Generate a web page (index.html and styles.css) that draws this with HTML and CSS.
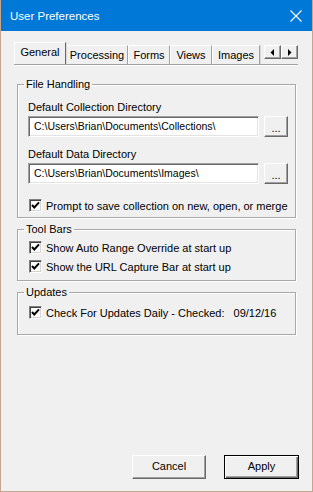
FILE: index.html
```html
<!DOCTYPE html>
<html lang="en">
<head>
  <meta charset="UTF-8" />
  <title>User Preferences</title>
  <link rel="stylesheet" href="styles.css">
</head>
<body>
  <div class="window">
    <!-- Title bar -->
    <div class="titlebar">
      <span class="title">User Preferences</span>
      <svg class="close" width="12" height="12" viewBox="0 0 12 12">
        <path d="M0.5 0.5 L11.5 11.5 M11.5 0.5 L0.5 11.5" stroke="#fff" stroke-width="1.1" fill="none" />
      </svg>
    </div>

    <div class="content">
      <!-- Tab strip -->
      <div class="tabs">
        <div class="tab selected">General</div>
        <div class="tab tab-processing">Processing</div>
        <div class="tab tab-forms">Forms</div>
        <div class="tab tab-views">Views</div>
        <div class="tab tab-images">Images</div>
        <div class="tab-arrows">
          <div class="arrow-btn">
            <svg width="5" height="7" viewBox="0 0 5 7"><path d="M4 0 L4 7 L0.5 3.5 Z" fill="#000" /></svg>
          </div>
          <div class="arrow-btn">
            <svg width="5" height="7" viewBox="0 0 5 7"><path d="M1 0 L1 7 L4.5 3.5 Z" fill="#000" /></svg>
          </div>
        </div>
      </div>

      <!-- File Handling -->
      <fieldset class="group group-files">
        <legend>File Handling</legend>
        <div class="field-label first">Default Collection Directory</div>
        <div class="path-row">
          <div class="textbox">C:\Users\Brian\Documents\Collections\</div>
          <div class="browse-btn">...</div>
        </div>
        <div class="field-label">Default Data Directory</div>
        <div class="path-row">
          <div class="textbox">C:\Users\Brian\Documents\Images\</div>
          <div class="browse-btn">...</div>
        </div>
        <div class="check-row prompt-row">
          <span class="checkbox"><svg width="11" height="11" viewBox="0 0 11 11"><path d="M2 5 L4.3 7.5 L9 2.3" stroke="#000" stroke-width="2" fill="none" /></svg></span>
          <span>Prompt to save collection on new, open, or merge</span>
        </div>
      </fieldset>

      <!-- Tool Bars -->
      <fieldset class="group group-toolbars">
        <legend>Tool Bars</legend>
        <div class="check-row toolbar-first">
          <span class="checkbox"><svg width="11" height="11" viewBox="0 0 11 11"><path d="M2 5 L4.3 7.5 L9 2.3" stroke="#000" stroke-width="2" fill="none" /></svg></span>
          <span>Show Auto Range Override at start up</span>
        </div>
        <div class="check-row toolbar-second">
          <span class="checkbox"><svg width="11" height="11" viewBox="0 0 11 11"><path d="M2 5 L4.3 7.5 L9 2.3" stroke="#000" stroke-width="2" fill="none" /></svg></span>
          <span>Show the URL Capture Bar at start up</span>
        </div>
      </fieldset>

      <!-- Updates -->
      <fieldset class="group group-updates">
        <legend>Updates</legend>
        <div class="check-row updates-row">
          <span class="checkbox"><svg width="11" height="11" viewBox="0 0 11 11"><path d="M2 5 L4.3 7.5 L9 2.3" stroke="#000" stroke-width="2" fill="none" /></svg></span>
          <span class="updates-text">Check For Updates Daily - Checked:</span>
          <span class="updates-date">09/12/16</span>
        </div>
      </fieldset>
    </div>

    <!-- Dialog buttons -->
    <div class="footer">
      <div class="btn">Cancel</div>
      <div class="btn default">Apply</div>
    </div>
  </div>
</body>
</html>
```

FILE: styles.css
```css
body {
  margin: 0;
  font-family: "Liberation Sans", Arial, sans-serif;
  font-size: 11px;
  color: #000;
  background: #f0f0f0;
}

.window {
  width: 313px;
  height: 492px;
  box-sizing: border-box;
  border: 1px solid #c4a690;
  border-top: none;
  background: #f0f0f0;
  display: flex;
  flex-direction: column;
}

.titlebar {
  height: 31px;
  background: #0078d7;
  color: #fff;
  display: flex;
  align-items: center;
  justify-content: space-between;
  padding: 0 10px 0 9px;
  font-size: 11.5px;
}

.close {
  display: block;
  margin-top: 1px;
}

.content {
  flex: 1;
  padding: 11px 14px 0 12px;
}

/* Tabs */
.tabs {
  display: flex;
  align-items: flex-end;
  height: 22px;
  border-bottom: 1px solid #a0a0a0;
  box-shadow: 0 1px 0 #fff;
  margin-left: 1px;
}

.tab {
  box-sizing: border-box;
  height: 19px;
  line-height: 18px;
  text-align: center;
  border-top: 1px solid #fff;
  border-left: 1px solid #fff;
  border-right: 1px solid #a0a0a0;
  box-shadow: 1px 0 0 #d8d8d8;
  font-size: 11px;
}

.tab.selected {
  width: 52px;
  height: 22px;
  line-height: 19px;
  border-right: 1px solid #696969;
  background: #f0f0f0;
  position: relative;
  z-index: 1;
}

.tab-processing { width: 62px; }
.tab-forms { width: 42px; }
.tab-views { width: 42px; }
.tab-images { width: 48px; }

.tab-arrows {
  display: flex;
  margin-left: auto;
  margin-bottom: 5px;
}

.arrow-btn {
  box-sizing: border-box;
  width: 17px;
  height: 14px;
  display: flex;
  align-items: center;
  justify-content: center;
  border-top: 1px solid #fff;
  border-left: 1px solid #fff;
  border-right: 1px solid #696969;
  border-bottom: 1px solid #696969;
  box-shadow: inset -1px -1px 0 #a0a0a0;
}

.arrow-btn svg {
  display: block;
}

/* Group boxes */
.group {
  min-width: 0;
  margin: 0 2px 0 4px;
  padding: 0 7px 0 10px;
  border: 1px solid #a8a8a8;
  box-shadow: 1px 1px 0 #fff, inset 1px 1px 0 #fff;
}

.group legend {
  padding: 0 2px;
  margin-left: -4px;
  line-height: 14px;
  font-size: 11px;
}

.group-files {
  margin-top: 12px;
  padding-bottom: 5px;
}

.group-toolbars {
  margin-top: 4px;
  padding-bottom: 7px;
}

.group-updates {
  margin-top: 4px;
  padding-bottom: 15px;
}

.field-label {
  line-height: 14px;
  margin-top: 10px;
  font-size: 11px;
}

.field-label.first {
  margin-top: 9px;
}

.path-row {
  display: flex;
  align-items: center;
  margin-top: 2px;
}

.textbox {
  box-sizing: border-box;
  width: 232px;
  height: 21px;
  line-height: 19px;
  padding-left: 5px;
  background: #fff;
  border-top: 1px solid #a0a0a0;
  border-left: 1px solid #a0a0a0;
  border-right: 1px solid #fff;
  border-bottom: 1px solid #fff;
  box-shadow: inset 1px 1px 0 #696969, inset -1px -1px 0 #e3e3e3;
  font-size: 10.5px;
  white-space: nowrap;
  overflow: hidden;
}

.browse-btn {
  box-sizing: border-box;
  width: 24px;
  height: 21px;
  margin-left: 5px;
  text-align: center;
  line-height: 23px;
  border-top: 1px solid #fff;
  border-left: 1px solid #fff;
  border-right: 1px solid #696969;
  border-bottom: 1px solid #696969;
  box-shadow: inset -1px -1px 0 #a0a0a0;
  font-size: 11px;
}

.check-row {
  display: flex;
  align-items: center;
  height: 13px;
  font-size: 11px;
  white-space: nowrap;
}

.prompt-row { margin-top: 15px; }
.toolbar-first { margin-top: 5px; }
.toolbar-second { margin-top: 6px; }
.updates-row { margin-top: 7px; }

.checkbox {
  box-sizing: border-box;
  width: 13px;
  height: 13px;
  margin: 0 4px 0 1px;
  background: #fff;
  border-top: 1px solid #808080;
  border-left: 1px solid #808080;
  border-right: 1px solid #fff;
  border-bottom: 1px solid #fff;
  box-shadow: inset 1px 1px 0 #404040, inset -1px -1px 0 #d4d4d4;
  display: flex;
  align-items: center;
  justify-content: center;
  flex-shrink: 0;
}

.checkbox svg {
  display: block;
}

.updates-date {
  margin-left: 9px;
}

/* Footer buttons */
.footer {
  display: flex;
  justify-content: flex-end;
  gap: 18px;
  padding: 0 13px 12px 0;
}

.btn {
  box-sizing: border-box;
  width: 74px;
  height: 24px;
  line-height: 21px;
  text-align: center;
  font-size: 11px;
  border-top: 1px solid #fff;
  border-left: 1px solid #fff;
  border-right: 1px solid #696969;
  border-bottom: 1px solid #696969;
  box-shadow: inset -1px -1px 0 #a0a0a0;
}

.btn.default {
  width: 75px;
  border: 1px solid #000;
  box-shadow: inset 1px 1px 0 #fff, inset -1px -1px 0 #696969, inset -2px -2px 0 #a0a0a0;
}
```
